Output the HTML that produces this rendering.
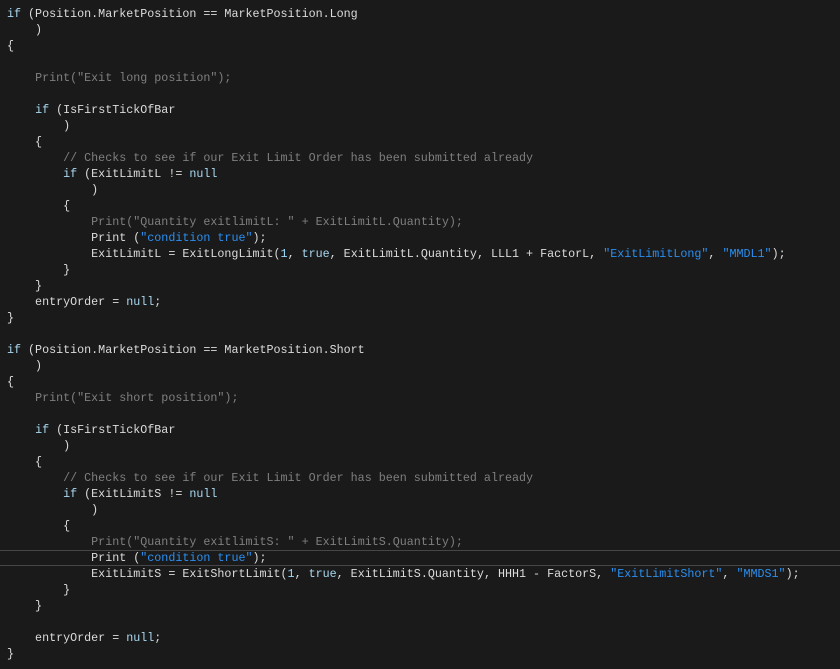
<!DOCTYPE html>
<html><head><meta charset="utf-8"><style>
html,body{margin:0;padding:0;background:#1a1a1a;width:840px;height:669px;overflow:hidden}
.code{position:absolute;left:7px;top:6px;font-family:"Liberation Mono",monospace;font-size:11.7px;line-height:16px;color:#dcdcdc;white-space:pre;letter-spacing:0}
.s{color:#2b8ff0}.c{color:#7f7f7f}.g{color:#7f7f7f}.n{color:#9cdcfe}.k{color:#a8d8f0}
.cur{position:absolute;left:0;top:550px;width:840px;height:14px;border-top:1px solid #464646;border-bottom:1px solid #464646}
</style></head><body>
<div class="cur"></div>
<div class="code"><span class="k">if</span> (Position.MarketPosition == MarketPosition.Long
    )
{

    <span class="g">Print("Exit long position");</span>

    <span class="k">if</span> (IsFirstTickOfBar
        )
    {
        <span class="c">// Checks to see if our Exit Limit Order has been submitted already</span>
        <span class="k">if</span> (ExitLimitL != <span class="k">null</span>
            )
        {
            <span class="g">Print("Quantity exitlimitL: " + ExitLimitL.Quantity);</span>
            Print (<span class="s">"condition true"</span>);
            ExitLimitL = ExitLongLimit(<span class="n">1</span>, <span class="k">true</span>, ExitLimitL.Quantity, LLL1 + FactorL, <span class="s">"ExitLimitLong"</span>, <span class="s">"MMDL1"</span>);
        }
    }
    entryOrder = <span class="k">null</span>;
}

<span class="k">if</span> (Position.MarketPosition == MarketPosition.Short
    )
{
    <span class="g">Print("Exit short position");</span>

    <span class="k">if</span> (IsFirstTickOfBar
        )
    {
        <span class="c">// Checks to see if our Exit Limit Order has been submitted already</span>
        <span class="k">if</span> (ExitLimitS != <span class="k">null</span>
            )
        {
            <span class="g">Print("Quantity exitlimitS: " + ExitLimitS.Quantity);</span>
            Print (<span class="s">"condition true"</span>);
            ExitLimitS = ExitShortLimit(<span class="n">1</span>, <span class="k">true</span>, ExitLimitS.Quantity, HHH1 - FactorS, <span class="s">"ExitLimitShort"</span>, <span class="s">"MMDS1"</span>);
        }
    }

    entryOrder = <span class="k">null</span>;
}</div>
</body></html>
